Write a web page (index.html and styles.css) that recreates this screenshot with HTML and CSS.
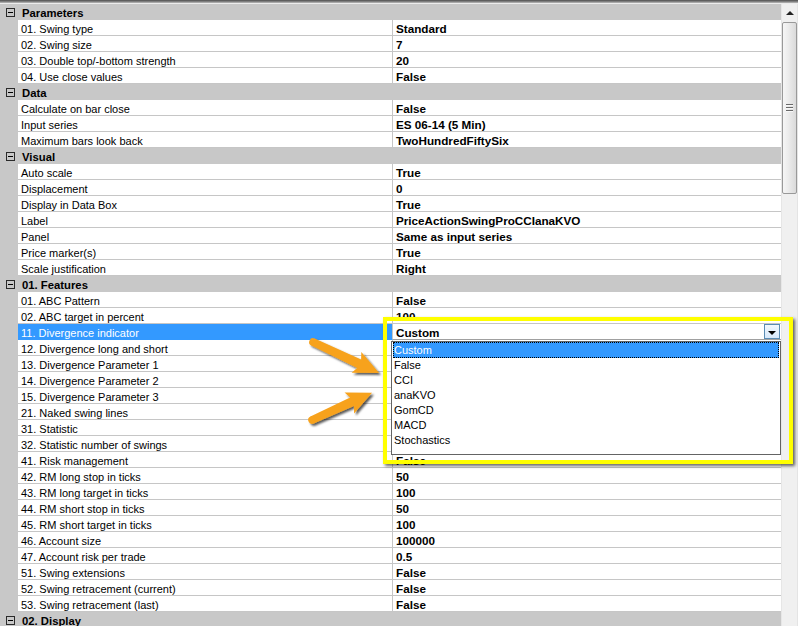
FILE: index.html
```html
<!DOCTYPE html>
<html>
<head>
<meta charset="utf-8">
<link rel="stylesheet" href="styles.css">
</head>
<body>
<div class="window">
  <div class="topbar"></div>
  <div class="main">
    <div class="grid">
      <div class="row cat"><span class="box"></span><span class="clabel">Parameters</span></div>
      <div class="row"><span class="gut"></span><span class="name">01. Swing type</span><span class="val">Standard</span></div>
      <div class="row"><span class="gut"></span><span class="name">02. Swing size</span><span class="val">7</span></div>
      <div class="row"><span class="gut"></span><span class="name">03. Double top/-bottom strength</span><span class="val">20</span></div>
      <div class="row"><span class="gut"></span><span class="name">04. Use close values</span><span class="val">False</span></div>
      <div class="row cat"><span class="box"></span><span class="clabel">Data</span></div>
      <div class="row"><span class="gut"></span><span class="name">Calculate on bar close</span><span class="val">False</span></div>
      <div class="row"><span class="gut"></span><span class="name">Input series</span><span class="val">ES 06-14 (5 Min)</span></div>
      <div class="row"><span class="gut"></span><span class="name">Maximum bars look back</span><span class="val">TwoHundredFiftySix</span></div>
      <div class="row cat"><span class="box"></span><span class="clabel">Visual</span></div>
      <div class="row"><span class="gut"></span><span class="name">Auto scale</span><span class="val">True</span></div>
      <div class="row"><span class="gut"></span><span class="name">Displacement</span><span class="val">0</span></div>
      <div class="row"><span class="gut"></span><span class="name">Display in Data Box</span><span class="val">True</span></div>
      <div class="row"><span class="gut"></span><span class="name">Label</span><span class="val">PriceActionSwingProCCIanaKVO</span></div>
      <div class="row"><span class="gut"></span><span class="name">Panel</span><span class="val">Same as input series</span></div>
      <div class="row"><span class="gut"></span><span class="name">Price marker(s)</span><span class="val">True</span></div>
      <div class="row"><span class="gut"></span><span class="name">Scale justification</span><span class="val">Right</span></div>
      <div class="row cat"><span class="box"></span><span class="clabel">01. Features</span></div>
      <div class="row"><span class="gut"></span><span class="name">01. ABC Pattern</span><span class="val">False</span></div>
      <div class="row"><span class="gut"></span><span class="name">02. ABC target in percent</span><span class="val">100</span></div>
      <div class="row selected"><span class="gut"></span><span class="name">11. Divergence indicator</span><span class="val edit"><span class="etext">Custom</span><span class="dbtn"><span class="dtri"></span></span></span></div>
      <div class="row"><span class="gut"></span><span class="name">12. Divergence long and short</span><span class="val"></span></div>
      <div class="row"><span class="gut"></span><span class="name">13. Divergence Parameter 1</span><span class="val"></span></div>
      <div class="row"><span class="gut"></span><span class="name">14. Divergence Parameter 2</span><span class="val"></span></div>
      <div class="row"><span class="gut"></span><span class="name">15. Divergence Parameter 3</span><span class="val"></span></div>
      <div class="row"><span class="gut"></span><span class="name">21. Naked swing lines</span><span class="val"></span></div>
      <div class="row"><span class="gut"></span><span class="name">31. Statistic</span><span class="val"></span></div>
      <div class="row"><span class="gut"></span><span class="name">32. Statistic number of swings</span><span class="val"></span></div>
      <div class="row"><span class="gut"></span><span class="name">41. Risk management</span><span class="val">False</span></div>
      <div class="row"><span class="gut"></span><span class="name">42. RM long stop in ticks</span><span class="val">50</span></div>
      <div class="row"><span class="gut"></span><span class="name">43. RM long target in ticks</span><span class="val">100</span></div>
      <div class="row"><span class="gut"></span><span class="name">44. RM short stop in ticks</span><span class="val">50</span></div>
      <div class="row"><span class="gut"></span><span class="name">45. RM short target in ticks</span><span class="val">100</span></div>
      <div class="row"><span class="gut"></span><span class="name">46. Account size</span><span class="val">100000</span></div>
      <div class="row"><span class="gut"></span><span class="name">47. Account risk per trade</span><span class="val">0.5</span></div>
      <div class="row"><span class="gut"></span><span class="name">51. Swing extensions</span><span class="val">False</span></div>
      <div class="row"><span class="gut"></span><span class="name">52. Swing retracement (current)</span><span class="val">False</span></div>
      <div class="row"><span class="gut"></span><span class="name">53. Swing retracement (last)</span><span class="val">False</span></div>
      <div class="row cat"><span class="box"></span><span class="clabel">02. Display</span></div>
    </div>
    <div class="scroll">
      <div class="sbtn"><span class="utri"></span></div>
      <div class="thumb"><span class="grip"></span></div>
    </div>
  </div>

  <div class="dlist">
    <div class="item sel">Custom</div>
    <div class="item">False</div>
    <div class="item">CCI</div>
    <div class="item">anaKVO</div>
    <div class="item">GomCD</div>
    <div class="item">MACD</div>
    <div class="item">Stochastics</div>
  </div>
  <div class="annot"></div>

  <svg class="arrows" width="798" height="626" viewBox="0 0 798 626">
    <defs>
      <filter id="sh" x="-20%" y="-50%" width="140%" height="200%">
        <feDropShadow dx="2" dy="2" stdDeviation="1.3" flood-color="#000" flood-opacity="0.65"/>
      </filter>
    </defs>
    <g filter="url(#sh)" fill="#f7a21c">
      <g transform="translate(313,342) rotate(25.2)">
        <polygon points="0,-3.8 51,-4.6 48,-11.5 73,0 48,11.5 51,4.6 0,3.8"/>
        <circle cx="0" cy="0" r="3.8"/>
      </g>
      <g transform="translate(312,420) rotate(-24.5)">
        <polygon points="0,-3.8 44,-4.6 41,-11.5 66,0 41,11.5 44,4.6 0,3.8"/>
        <circle cx="0" cy="0" r="3.8"/>
      </g>
    </g>
  </svg>
</div>
</body>
</html>
```

FILE: styles.css
```css
html, body {
  margin: 0;
  padding: 0;
  background: #ffffff;
  overflow: hidden;
}
body {
  font-family: "Liberation Sans", Arial, sans-serif;
  font-size: 11px;
  color: #000;
}
.window {
  position: relative;
  width: 798px;
  height: 626px;
  overflow: hidden;
  display: flex;
  flex-direction: column;
}
.topbar {
  flex: none;
  height: 4px;
  background: linear-gradient(to bottom, #5e5e5e 0 1px, #7f7f7f 1px 2px, #a8a8a8 2px 3px, #ececec 3px 4px);
}
.main {
  flex: 1;
  display: flex;
  min-height: 0;
}
.grid {
  flex: none;
  width: 781px;
}
.row {
  display: flex;
  height: 16px;
}
.gut {
  flex: none;
  width: 18px;
  background: #c8c8c8;
}
.name {
  box-sizing: border-box;
  flex: none;
  width: 375px;
  height: 16px;
  padding-left: 3px;
  padding-top: 2px;
  line-height: 14px;
  font-size: 11px;
  white-space: nowrap;
  overflow: hidden;
  border-right: 1px solid #c6c6c6;
  border-bottom: 1px solid #c6c6c6;
  background: #fff;
}
.val {
  box-sizing: border-box;
  flex: 1;
  height: 16px;
  padding-left: 3px;
  padding-top: 1px;
  line-height: 15px;
  font-size: 11.7px;
  font-weight: bold;
  white-space: nowrap;
  overflow: hidden;
  border-bottom: 1px solid #c6c6c6;
  background: #fff;
}
.row.cat {
  background: #c8c8c8;
  align-items: center;
}
.box {
  flex: none;
  position: relative;
  box-sizing: border-box;
  width: 9px;
  height: 9px;
  margin-left: 6px;
  margin-right: 7px;
  margin-top: 1px;
  border: 1px solid #2a2a2a;
}
.box::after {
  content: "";
  position: absolute;
  left: 1px;
  top: 3px;
  width: 5px;
  height: 1px;
  background: #000;
}
.clabel {
  font-weight: bold;
  font-size: 11.3px;
  line-height: 16px;
  padding-top: 2px;
  white-space: nowrap;
}
.selected .name {
  background: #3399ff;
  color: #fff;
  border-bottom-color: #3399ff;
}
.val.edit {
  display: flex;
  align-items: center;
  justify-content: space-between;
  padding-top: 0;
  padding-right: 1px;
  border-bottom-color: #a0a0a0;
}
.etext {
  padding-top: 1px;
}
.dbtn {
  box-sizing: border-box;
  width: 16px;
  height: 15px;
  border: 1px solid #5a8cb4;
  background: linear-gradient(to bottom, #f2f8fe, #d6e8fa);
  display: flex;
  align-items: center;
  justify-content: center;
}
.dtri {
  width: 0;
  height: 0;
  border-left: 4px solid transparent;
  border-right: 4px solid transparent;
  border-top: 4px solid #000;
  margin-top: 3px;
}
.scroll {
  flex: none;
  width: 17px;
  background: linear-gradient(to right, #e6e6e6 0 1px, #f0f0f0 1px 16px, #e4e4e4 16px);
  display: flex;
  flex-direction: column;
  align-items: center;
}
.sbtn {
  height: 17px;
  width: 17px;
  display: flex;
  align-items: center;
  justify-content: center;
}
.utri {
  width: 0;
  height: 0;
  border-left: 4px solid transparent;
  border-right: 4px solid transparent;
  border-bottom: 4px solid #222;
  margin-top: 1px;
}
.thumb {
  box-sizing: border-box;
  width: 15px;
  height: 172px;
  margin-top: 1px;
  border: 1px solid #999999;
  border-radius: 2px;
  background: linear-gradient(to right, #f6f6f6 0, #ececec 40%, #dadada 100%);
  display: flex;
  align-items: center;
  justify-content: center;
}
.grip {
  width: 7px;
  height: 8px;
  background: repeating-linear-gradient(to bottom, #6a6a6a 0 1px, #f8f8f8 1px 2px, transparent 2px 3px);
}
.dlist {
  position: absolute;
  left: 391px;
  top: 341px;
  width: 390px;
  height: 114px;
  box-sizing: border-box;
  border: 1px solid #646464;
  background: #fff;
  padding: 0 1px;
}
.item {
  height: 15px;
  line-height: 15px;
  font-size: 11px;
  padding-left: 1px;
  white-space: nowrap;
}
.item.sel {
  height: 16px;
  line-height: 16px;
  background: #3399ff;
  color: #fff;
  outline: 1px dotted #000;
  outline-offset: -1px;
}
.annot {
  position: absolute;
  left: 383px;
  top: 317px;
  width: 410px;
  height: 147px;
  box-sizing: border-box;
  border: 4px solid #ffff00;
  box-shadow: 2px 2px 3px rgba(0, 0, 0, 0.6);
}
.arrows {
  position: absolute;
  left: 0;
  top: 0;
  pointer-events: none;
}
```
